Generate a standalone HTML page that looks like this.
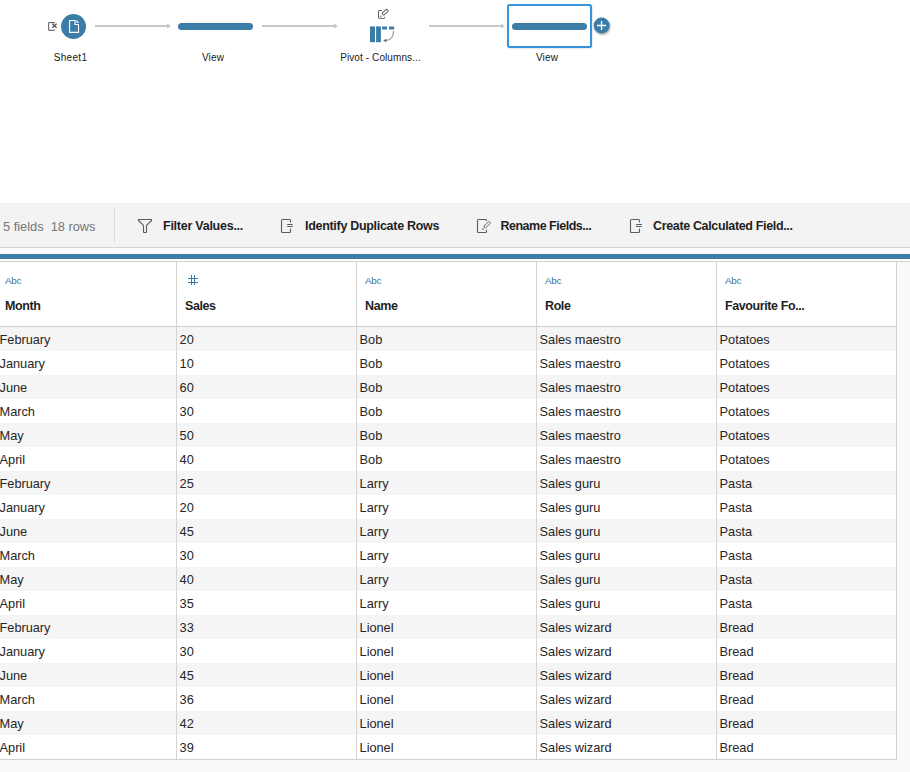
<!DOCTYPE html><html><head><meta charset="utf-8"><title>Flow</title><style>
*{box-sizing:border-box;margin:0;padding:0}
html,body{width:910px;height:772px;overflow:hidden;background:#fff;font-family:"Liberation Sans",sans-serif;color:#333}
.abs{position:absolute}
#flow{position:absolute;left:0;top:0;width:910px;height:203px;background:#fff}
.lbl{position:absolute;font-size:10px;line-height:12px;color:#1a1a1a;white-space:nowrap;text-align:center;letter-spacing:0.15px}
#tb{position:absolute;left:0;top:203px;width:910px;height:45px;background:#f3f3f3;border-bottom:1px solid #d4d4d4}
#tb .t{position:absolute;top:16px;font-size:12.5px;line-height:15px;font-weight:bold;color:#1f1f1f;white-space:nowrap;letter-spacing:-0.25px}
#tb .c{position:absolute;top:16px;font-size:12.8px;line-height:15px;color:#757575;white-space:nowrap}
#gap{position:absolute;left:0;top:248px;width:910px;height:6px;background:#fafafa}
#bar{position:absolute;left:0;top:254px;width:910px;height:5px;background:#3b7da6}
#under{position:absolute;left:0;top:259px;width:910px;height:513px;background:#fafafa;border-top:2px solid #fff}
#topline{position:absolute;left:0;top:261px;width:910px;height:1px;background:#d0d0d0}
#grid{position:absolute;left:-4px;top:261px;width:901px;height:499px;background:#fff;border:1px solid #d0d0d0}
.col{position:absolute;top:0;width:180px;height:497px;border-right:1px solid #d4d4d4}
.hd{position:absolute;left:0;top:0;width:179px;height:65px;border-bottom:1px solid #d0d0d0;background:#fff}
.ty{position:absolute;left:8px;top:13px;font-size:9.8px;line-height:11px;color:#35759f;letter-spacing:-0.3px}
.nm{position:absolute;left:8px;top:37px;font-size:12.5px;line-height:15px;font-weight:bold;color:#1f1f1f;white-space:nowrap;letter-spacing:-0.4px}
.cell{position:absolute;left:0;width:179px;height:24px;padding-left:2.6px;padding-top:1px;font-size:12.8px;line-height:24px;color:#262626;white-space:nowrap;letter-spacing:-0.05px}
.odd{background:#f5f5f5}
</style></head><body>
<div id="flow"><svg class="abs" style="left:0;top:0" width="910" height="203" viewBox="0 0 910 203">
<g stroke="#c8c8c8" stroke-width="2" fill="none">
<path d="M95 26H168"/><path d="M262 26H335"/><path d="M429 26H502"/>
</g>
<g fill="#c8c8c8"><path d="M167 23.2L170.8 26L167 28.8Z"/><path d="M334 23.2L337.8 26L334 28.8Z"/><path d="M501 23.2L504.8 26L501 28.8Z"/></g>
<circle cx="73.5" cy="26.5" r="12.5" fill="#3b7da6"/>
<path d="M75 20.55H69.6V32.35H78.5V24.5H75Z" fill="none" stroke="#fff" stroke-width="1.05" stroke-linejoin="miter"/>
<path d="M76.4 19.9L79.2 22.7H76.4Z" fill="#fff"/>
<path d="M54.5 23.4V22.6H48.7V30.3H54.5V29.5" fill="none" stroke="#555" stroke-width="1"/>
<path d="M52.3 23.8L56.6 27.7M56.6 23.8L52.3 27.7" stroke="#505050" stroke-width="1.2"/>
<rect x="178" y="23" width="75" height="7" rx="3.5" fill="#3b7da6"/>
<rect x="370" y="26.4" width="5" height="15.8" fill="#3b7da6"/>
<rect x="376.1" y="26.4" width="4.8" height="15.8" fill="#3b7da6"/>
<rect x="382.1" y="26.5" width="5" height="3" fill="#3b7da6"/>
<rect x="389" y="26.5" width="5.2" height="3" fill="#3b7da6"/>
<path d="M393.5 31Q393.5 40.5 385 40.5" fill="none" stroke="#666" stroke-width="0.85"/>
<path d="M383.2 40.5L386.2 38.7V42.3Z" fill="#666"/>
<path d="M382 10.5H379Q378.5 10.5 378.5 11V17.9Q378.5 18.4 379 18.4H384Q384.5 18.4 384.5 17.9V16.9" fill="none" stroke="#666" stroke-width="1"/>
<g transform="translate(385.05 12.25) rotate(-42)"><rect x="-3.2" y="-1.3" width="6.5" height="2.6" rx="0.8" fill="none" stroke="#5a5a5a" stroke-width="1"/></g>
<path d="M379.7 17.2L380.4 15.3L381.8 16.6Z" fill="#666"/>
<defs><filter id="sh" x="-30%" y="-30%" width="160%" height="160%"><feGaussianBlur stdDeviation="1.2"/></filter></defs>
<rect x="508" y="5.5" width="84" height="42.5" rx="2" fill="#000" opacity="0.22" filter="url(#sh)"/>
<rect x="508" y="5" width="83" height="42" rx="1.5" fill="#fff" stroke="#3694dd" stroke-width="2"/>
<rect x="512" y="23" width="75" height="7" rx="3.5" fill="#3b7da6"/>
<circle cx="602.3" cy="26.6" r="7.9" fill="#000" opacity="0.4" filter="url(#sh)"/>
<circle cx="601.6" cy="25.5" r="7.9" fill="#3b7da6"/>
<path d="M597 25.5H606.1M601.55 20.9V30.1" stroke="#fff" stroke-width="1.3"/>
</svg>
<div class="lbl" style="left:40.5px;width:60px;top:52px;letter-spacing:0.3px">Sheet1</div>
<div class="lbl" style="left:183px;width:60px;top:52px">View</div>
<div class="lbl" style="left:330.5px;width:100px;top:52px;letter-spacing:0.1px">Pivot - Columns...</div>
<div class="lbl" style="left:517px;width:60px;top:52px">View</div>
</div>
<div id="tb"><div class="c" style="left:3px">5 fields&nbsp; 18 rows</div>
<div class="abs" style="left:114px;top:5px;width:1px;height:34px;background:#d9d9d9"></div>
<svg class="abs" style="left:0;top:0" width="910" height="45" viewBox="0 203 910 45" fill="none" stroke="#5c5c5c" stroke-width="1.1" stroke-linejoin="round" stroke-linecap="round">
<path d="M138.5 219.5H151.5V220.5L146.5 225.3V232Q146.5 232.5 146 232.5H144Q143.5 232.5 143.5 232V225.3L138.5 220.5Z"/>
<path d="M290.5 222V220.5Q290.5 219.5 289.5 219.5H282.5Q281.5 219.5 281.5 220.5V231.5Q281.5 232.5 282.5 232.5H289.5Q290.5 232.5 290.5 231.5V229"/>
<path d="M287.2 224.5H292.8M287.2 226.5H292.8" stroke-linecap="butt" stroke-width="1"/>
<path d="M486.5 220.8V220.5Q486.5 219.5 485.5 219.5H478.5Q477.5 219.5 477.5 220.5V231.5Q477.5 232.5 478.5 232.5H485.5Q486.5 232.5 486.5 231.5V230.3"/>
<g transform="translate(487.15 224.8) rotate(-44)"><rect x="-3.7" y="-1.15" width="7.6" height="2.3" rx="0.6" stroke-width="0.85"/></g>
<path d="M482 229.9L482.8 227.9L484.3 229.3Z" fill="#5c5c5c" stroke="none"/>
<path d="M639.5 222V220.5Q639.5 219.5 638.5 219.5H631.5Q630.5 219.5 630.5 220.5V231.5Q630.5 232.5 631.5 232.5H638.5Q639.5 232.5 639.5 231.5V229"/>
<path d="M636.1 224.5H641.9M636.1 226.5H641.9" stroke-linecap="butt" stroke-width="1"/>
</svg>
<div class="t" style="left:163px">Filter Values...</div>
<div class="t" style="left:305px;letter-spacing:-0.3px">Identify Duplicate Rows</div>
<div class="t" style="left:500.5px;letter-spacing:-0.5px">Rename Fields...</div>
<div class="t" style="left:653px;letter-spacing:-0.35px">Create Calculated Field...</div>
</div>
<div id="gap"></div><div id="under"></div><div id="topline"></div><div id="bar"></div>
<div id="grid">
<div class="col" style="left:0px">
<div class="hd"><div class="ty">Abc</div><div class="nm">Month</div></div>
<div class="cell odd" style="top:65px">February</div>
<div class="cell" style="top:89px">January</div>
<div class="cell odd" style="top:113px">June</div>
<div class="cell" style="top:137px">March</div>
<div class="cell odd" style="top:161px">May</div>
<div class="cell" style="top:185px">April</div>
<div class="cell odd" style="top:209px">February</div>
<div class="cell" style="top:233px">January</div>
<div class="cell odd" style="top:257px">June</div>
<div class="cell" style="top:281px">March</div>
<div class="cell odd" style="top:305px">May</div>
<div class="cell" style="top:329px">April</div>
<div class="cell odd" style="top:353px">February</div>
<div class="cell" style="top:377px">January</div>
<div class="cell odd" style="top:401px">June</div>
<div class="cell" style="top:425px">March</div>
<div class="cell odd" style="top:449px">May</div>
<div class="cell" style="top:473px">April</div>
</div>
<div class="col" style="left:180px">
<div class="hd"><svg class="ty" style="top:12px;left:10px" width="12" height="12" viewBox="0 0 12 12"><path d="M1 4.5H11M1 8.5H11M4.5 1V11M7.5 1V11" stroke="#3b7da6" stroke-width="1" fill="none"/></svg><div class="nm">Sales</div></div>
<div class="cell odd" style="top:65px">20</div>
<div class="cell" style="top:89px">10</div>
<div class="cell odd" style="top:113px">60</div>
<div class="cell" style="top:137px">30</div>
<div class="cell odd" style="top:161px">50</div>
<div class="cell" style="top:185px">40</div>
<div class="cell odd" style="top:209px">25</div>
<div class="cell" style="top:233px">20</div>
<div class="cell odd" style="top:257px">45</div>
<div class="cell" style="top:281px">30</div>
<div class="cell odd" style="top:305px">40</div>
<div class="cell" style="top:329px">35</div>
<div class="cell odd" style="top:353px">33</div>
<div class="cell" style="top:377px">30</div>
<div class="cell odd" style="top:401px">45</div>
<div class="cell" style="top:425px">36</div>
<div class="cell odd" style="top:449px">42</div>
<div class="cell" style="top:473px">39</div>
</div>
<div class="col" style="left:360px">
<div class="hd"><div class="ty">Abc</div><div class="nm">Name</div></div>
<div class="cell odd" style="top:65px">Bob</div>
<div class="cell" style="top:89px">Bob</div>
<div class="cell odd" style="top:113px">Bob</div>
<div class="cell" style="top:137px">Bob</div>
<div class="cell odd" style="top:161px">Bob</div>
<div class="cell" style="top:185px">Bob</div>
<div class="cell odd" style="top:209px">Larry</div>
<div class="cell" style="top:233px">Larry</div>
<div class="cell odd" style="top:257px">Larry</div>
<div class="cell" style="top:281px">Larry</div>
<div class="cell odd" style="top:305px">Larry</div>
<div class="cell" style="top:329px">Larry</div>
<div class="cell odd" style="top:353px">Lionel</div>
<div class="cell" style="top:377px">Lionel</div>
<div class="cell odd" style="top:401px">Lionel</div>
<div class="cell" style="top:425px">Lionel</div>
<div class="cell odd" style="top:449px">Lionel</div>
<div class="cell" style="top:473px">Lionel</div>
</div>
<div class="col" style="left:540px">
<div class="hd"><div class="ty">Abc</div><div class="nm">Role</div></div>
<div class="cell odd" style="top:65px">Sales maestro</div>
<div class="cell" style="top:89px">Sales maestro</div>
<div class="cell odd" style="top:113px">Sales maestro</div>
<div class="cell" style="top:137px">Sales maestro</div>
<div class="cell odd" style="top:161px">Sales maestro</div>
<div class="cell" style="top:185px">Sales maestro</div>
<div class="cell odd" style="top:209px">Sales guru</div>
<div class="cell" style="top:233px">Sales guru</div>
<div class="cell odd" style="top:257px">Sales guru</div>
<div class="cell" style="top:281px">Sales guru</div>
<div class="cell odd" style="top:305px">Sales guru</div>
<div class="cell" style="top:329px">Sales guru</div>
<div class="cell odd" style="top:353px">Sales wizard</div>
<div class="cell" style="top:377px">Sales wizard</div>
<div class="cell odd" style="top:401px">Sales wizard</div>
<div class="cell" style="top:425px">Sales wizard</div>
<div class="cell odd" style="top:449px">Sales wizard</div>
<div class="cell" style="top:473px">Sales wizard</div>
</div>
<div class="col" style="left:720px">
<div class="hd"><div class="ty">Abc</div><div class="nm">Favourite Fo...</div></div>
<div class="cell odd" style="top:65px">Potatoes</div>
<div class="cell" style="top:89px">Potatoes</div>
<div class="cell odd" style="top:113px">Potatoes</div>
<div class="cell" style="top:137px">Potatoes</div>
<div class="cell odd" style="top:161px">Potatoes</div>
<div class="cell" style="top:185px">Potatoes</div>
<div class="cell odd" style="top:209px">Pasta</div>
<div class="cell" style="top:233px">Pasta</div>
<div class="cell odd" style="top:257px">Pasta</div>
<div class="cell" style="top:281px">Pasta</div>
<div class="cell odd" style="top:305px">Pasta</div>
<div class="cell" style="top:329px">Pasta</div>
<div class="cell odd" style="top:353px">Bread</div>
<div class="cell" style="top:377px">Bread</div>
<div class="cell odd" style="top:401px">Bread</div>
<div class="cell" style="top:425px">Bread</div>
<div class="cell odd" style="top:449px">Bread</div>
<div class="cell" style="top:473px">Bread</div>
</div>
</div>
</body></html>
